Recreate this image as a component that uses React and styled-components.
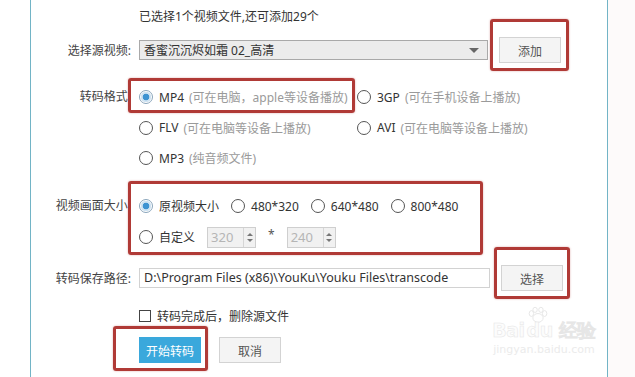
import styled, { createGlobalStyle } from "styled-components";

const GlobalStyle = createGlobalStyle`
  html, body {
    margin: 0;
    padding: 0;
    background: #fff;
  }
  body {
    font-family: "Noto Sans", "Noto Sans CJK SC", sans-serif;
    font-size: 12px;
    color: #333;
  }
`;

const formats = [
  { name: "MP4", hint: "(可在电脑，apple等设备播放)", checked: true },
  { name: "3GP", hint: "(可在手机设备上播放)" },
  { name: "FLV", hint: "(可在电脑等设备上播放)" },
  { name: "AVI", hint: "(可在电脑等设备上播放)" },
  { name: "MP3", hint: "(纯音频文件)" },
];

const sizes = ["原视频大小", "480*320", "640*480", "800*480"];

// red annotation boxes drawn over the dialog (panel coords)
const highlights = [
  { left: 459, top: 19, width: 79, height: 52 },
  { left: 97, top: 78, width: 227, height: 35 },
  { left: 97, top: 181, width: 355, height: 74 },
  { left: 463, top: 247, width: 76, height: 52 },
  { left: 82, top: 326, width: 95, height: 45 },
];

export default function App() {
  return (
    <>
      <GlobalStyle />
      <Page>
        <Gutter />
        <Panel>
          <Info>已选择1个视频文件,还可添加29个</Info>

          <Row $mt={11} $h={26}>
            <Label>选择源视频:</Label>
            <Select>
              <span>香蜜沉沉烬如霜 02_高清</span>
              <Caret />
            </Select>
            <Button $side>添加</Button>
          </Row>

          <Block $mt={24}>
            <Label $h={20}>转码格式:</Label>
            <FormatGrid>
              {formats.map((f) => (
                <Option key={f.name}>
                  <Radio $checked={f.checked} />
                  <span>{f.name}</span>
                  <Hint>{f.hint}</Hint>
                </Option>
              ))}
            </FormatGrid>
          </Block>

          <Block $mt={27}>
            <Label $h={22}>视频画面大小:</Label>
            <SizeRows>
              <SizeLine>
                {sizes.map((s, i) => (
                  <Option key={s}>
                    <Radio $checked={i === 0} />
                    <span>{s}</span>
                  </Option>
                ))}
              </SizeLine>
              <SizeLine>
                <Option>
                  <Radio />
                  <span>自定义</span>
                </Option>
                <Spin>
                  <span>320</span>
                  <SpinArrows>
                    <i />
                    <i />
                  </SpinArrows>
                </Spin>
                <Times>*</Times>
                <Spin>
                  <span>240</span>
                  <SpinArrows>
                    <i />
                    <i />
                  </SpinArrows>
                </Spin>
              </SizeLine>
            </SizeRows>
          </Block>

          <Row $mt={17} $h={26}>
            <Label>转码保存路径:</Label>
            <PathInput>D:\Program Files (x86)\YouKu\Youku Files\transcode</PathInput>
            <Button $side>选择</Button>
          </Row>

          <Row $mt={16} $h={18}>
            <Label />
            <Check>
              <Box />
              <span>转码完成后，删除源文件</span>
            </Check>
          </Row>

          <Row $mt={12} $h={26}>
            <Label />
            <Actions>
              <Button $primary>开始转码</Button>
              <Button>取消</Button>
            </Actions>
          </Row>

          {highlights.map((h, i) => (
            <Highlight
              key={i}
              $left={h.left}
              $top={h.top}
              $width={h.width}
              $height={h.height}
            />
          ))}

          <Watermark>
            <WmBrand>
              Bai
              <Paw viewBox="0 0 30 22">
                <ellipse cx="15" cy="15" rx="7" ry="6" />
                <ellipse cx="6" cy="9" rx="3" ry="4" />
                <ellipse cx="11" cy="4" rx="3" ry="3.5" />
                <ellipse cx="19" cy="4" rx="3" ry="3.5" />
                <ellipse cx="24" cy="9" rx="3" ry="4" />
              </Paw>
              du 经验
            </WmBrand>
            <WmUrl>jingyan.baidu.com</WmUrl>
          </Watermark>
        </Panel>
        <Side />
      </Page>
    </>
  );
}

const Page = styled.div`
  display: flex;
  width: 635px;
  height: 377px;
  overflow: hidden;
`;

const Gutter = styled.div`
  width: 30px;
  flex-shrink: 0;
  background: #fff;
`;

const Side = styled.div`
  flex: 1;
  background: #fdfafa;
`;

const Panel = styled.div`
  position: relative;
  width: 576px;
  flex-shrink: 0;
  border-left: 1px solid #72b4c6;
  border-right: 1px solid #72b4c6;
  padding-top: 8px;
  background: #fff;
`;

const Info = styled.div`
  margin-left: 108px;
  height: 18px;
  line-height: 18px;
`;

const Row = styled.div`
  display: flex;
  align-items: center;
  gap: 8px;
  margin-top: ${(p) => p.$mt}px;
  height: ${(p) => p.$h}px;
`;

const Block = styled.div`
  display: flex;
  align-items: flex-start;
  gap: 8px;
  margin-top: ${(p) => p.$mt}px;
`;

const Label = styled.div`
  width: 100px;
  flex-shrink: 0;
  text-align: right;
  color: #444;
  white-space: nowrap;
  ${(p) => p.$h && `height: ${p.$h}px; line-height: ${p.$h}px;`}
`;

const Select = styled.div`
  box-sizing: border-box;
  width: 349px;
  height: 20px;
  display: flex;
  align-items: center;
  justify-content: space-between;
  padding: 0 8px 0 4px;
  background: #ececec;
  border: 1px solid #a9a9a9;
  color: #333;
  font-size: 12px;
`;

const Caret = styled.i`
  width: 0;
  height: 0;
  border-left: 5px solid transparent;
  border-right: 5px solid transparent;
  border-top: 5px solid #666;
`;

const Button = styled.button`
  box-sizing: border-box;
  width: 62px;
  height: 26px;
  margin-left: ${(p) => (p.$side ? "3px" : 0)};
  padding: 0;
  font: inherit;
  font-family: "Noto Sans CJK SC", sans-serif;
  font-size: 12px;
  color: ${(p) => (p.$primary ? "#fff" : "#555")};
  background: ${(p) => (p.$primary ? "#3aa8dc" : "#f4f4f4")};
  border: 1px solid ${(p) => (p.$primary ? "#3aa8dc" : "#d3d3d3")};
`;

const FormatGrid = styled.div`
  display: grid;
  grid-template-columns: 218px auto;
  grid-auto-rows: 20px;
  row-gap: 10.5px;
`;

const Option = styled.label`
  display: flex;
  align-items: center;
  gap: 6px;
  white-space: nowrap;
  font-size: 12px;
  color: #333;
`;

const Hint = styled.span`
  color: #9a9a9a;
  margin-left: -1px;
`;

const Radio = styled.span`
  box-sizing: border-box;
  width: 14px;
  height: 14px;
  flex-shrink: 0;
  border-radius: 50%;
  border: 1px solid ${(p) => (p.$checked ? "#8aa5bb" : "#555")};
  background: ${(p) =>
    p.$checked
      ? "radial-gradient(circle, #3e93d1 0 3.2px, #cfe3f2 3.6px 5px, #fff 5.4px)"
      : "#fff"};
`;

const SizeRows = styled.div`
  display: flex;
  flex-direction: column;
  gap: 9px;
`;

const SizeLine = styled.div`
  display: flex;
  align-items: center;
  gap: 12px;
  height: 22px;
`;

const Spin = styled.div`
  box-sizing: border-box;
  width: 49px;
  height: 21px;
  display: flex;
  justify-content: space-between;
  align-items: stretch;
  background: #f1f1f1;
  border: 1px solid #cfcfcf;
  color: #b5b5b5;
  font-size: 13px;

  span {
    padding-left: 3px;
    line-height: 19px;
  }
`;

const SpinArrows = styled.div`
  width: 11px;
  border-left: 1px solid #d6d6d6;
  display: flex;
  flex-direction: column;
  align-items: center;
  justify-content: center;
  gap: 3px;

  i {
    width: 0;
    height: 0;
    border-left: 3px solid transparent;
    border-right: 3px solid transparent;
  }
  i:first-child {
    border-bottom: 3px solid #777;
  }
  i:last-child {
    border-top: 3px solid #777;
  }
`;

const Times = styled.span`
  color: #555;
  font-size: 12px;
  margin-top: -6px;
`;

const PathInput = styled.div`
  box-sizing: border-box;
  width: 351px;
  height: 20px;
  line-height: 18px;
  padding-left: 4px;
  border: 1px solid #d2d2d2;
  font-size: 12.5px;
  color: #333;
  white-space: nowrap;
  overflow: hidden;
`;

const Check = styled.label`
  display: flex;
  align-items: center;
  gap: 6px;
  font-size: 12px;
  color: #333;
`;

const Box = styled.span`
  box-sizing: border-box;
  width: 12px;
  height: 12px;
  border: 1px solid #444;
  background: #fff;
`;

const Actions = styled.div`
  display: flex;
  gap: 18px;
`;

const Highlight = styled.div`
  position: absolute;
  box-sizing: border-box;
  left: ${(p) => p.$left}px;
  top: ${(p) => p.$top}px;
  width: ${(p) => p.$width}px;
  height: ${(p) => p.$height}px;
  border: 3px solid #b03a36;
  border-radius: 3px;
  box-shadow: 0 0 2px rgba(176, 58, 54, 0.45);
  pointer-events: none;
`;

const Watermark = styled.div`
  position: absolute;
  left: 457px;
  top: 306px;
  width: 112px;
  display: flex;
  flex-direction: column;
  align-items: center;
  font-family: "DejaVu Sans", sans-serif;
  pointer-events: none;
`;

const WmBrand = styled.div`
  display: flex;
  align-items: flex-end;
  font-size: 19px;
  font-weight: bold;
  line-height: 24px;
  letter-spacing: -0.5px;
  -webkit-text-stroke: 0.5px #e6e6e6;
  color: #fcfcfc;
`;

const Paw = styled.svg`
  width: 22px;
  height: 18px;
  margin: 0 -22px 18px 2px;
  fill: none;
  stroke: #e6e6e6;
  stroke-width: 1.3;
`;

const WmUrl = styled.div`
  font-size: 11px;
  line-height: 15px;
  color: #ebebeb;
`;
